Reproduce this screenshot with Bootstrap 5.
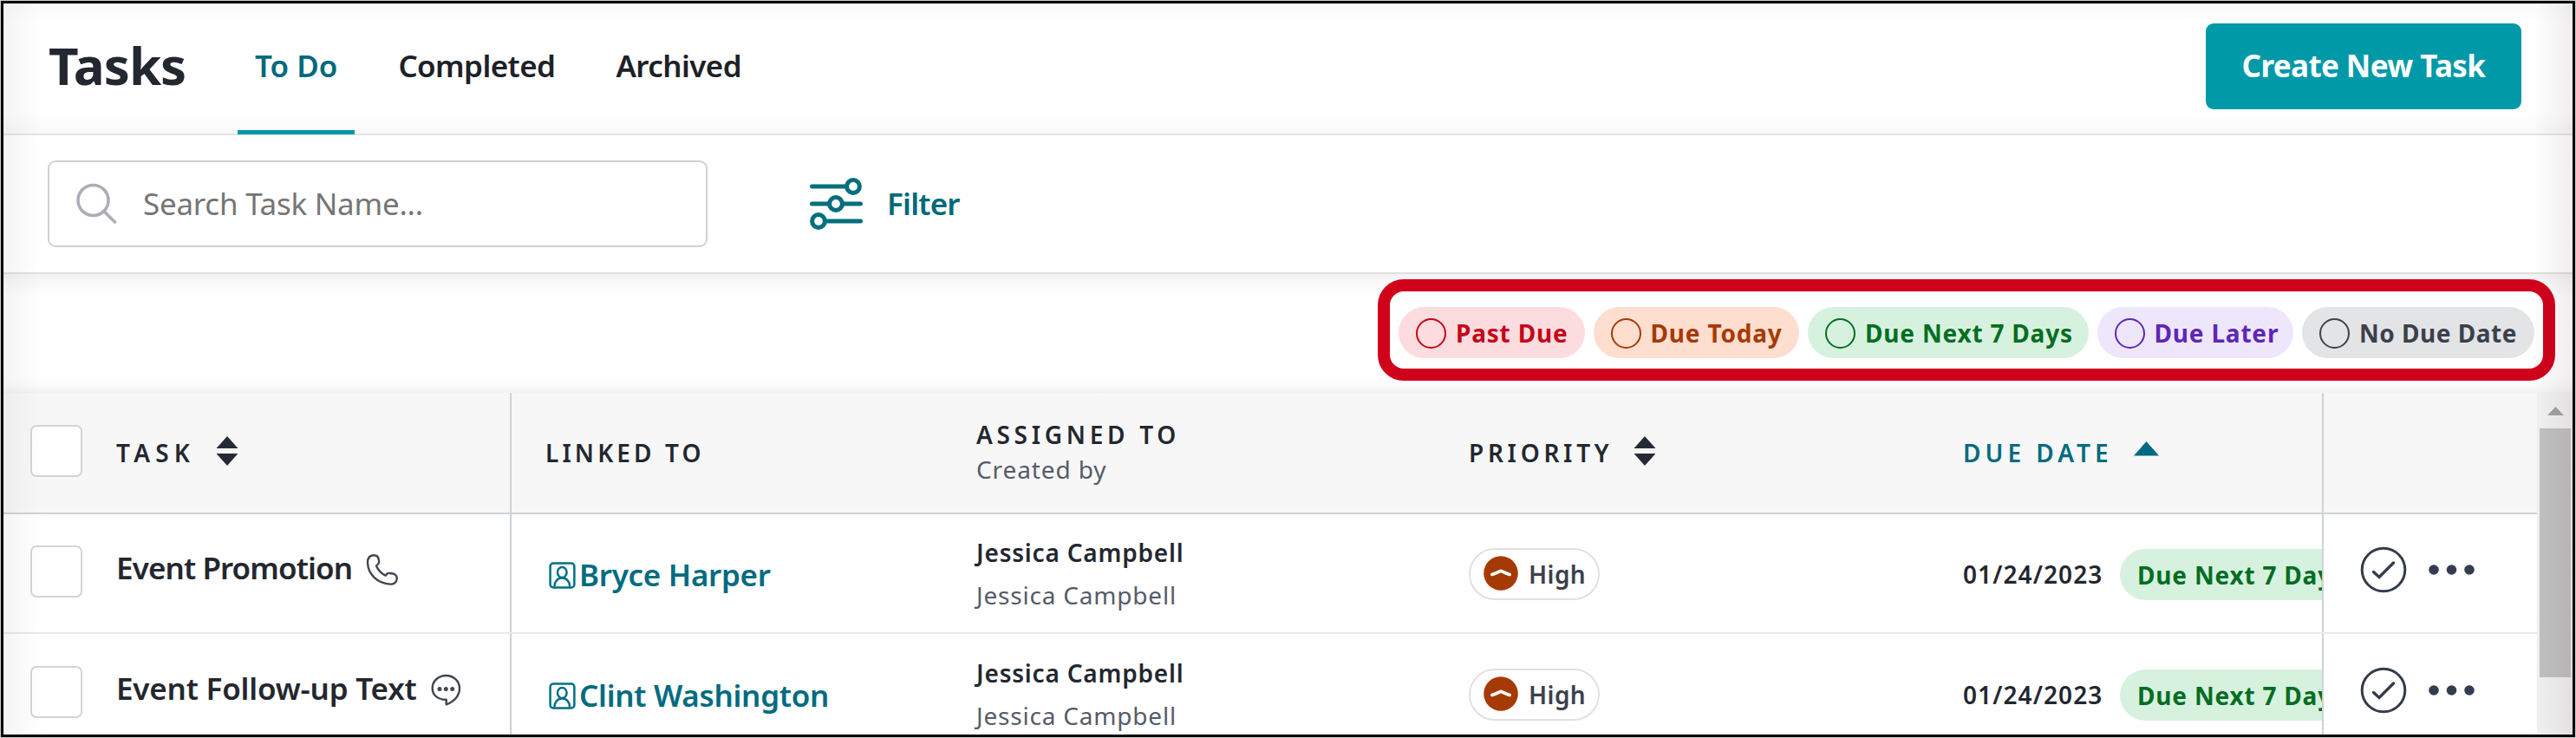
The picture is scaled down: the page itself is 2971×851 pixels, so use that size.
<!DOCTYPE html>
<html lang="en">
<head>
    <meta charset="UTF-8">
    <meta name="viewport" content="width=device-width, initial-scale=1.0">
    <title>Tasks</title>
    <!-- Bootstrap CSS -->
    <link href="https://cdn.jsdelivr.net/npm/bootstrap@5.3.0/dist/css/bootstrap.min.css" rel="stylesheet">
    <style>
        body {
            font-family: "Noto Sans", "Open Sans", sans-serif;
            font-size: 28px;
            color: #23272f;
            background: #cfcfcf;
            padding: 1px;
            white-space: nowrap;
        }

        svg {
            display: block;
            flex: none;
        }

        .app-frame {
            height: 849px;
            border: 3px solid #000;
            background: #fff;
        }

        /* Soft shading along the sides of the window */
        .app-frame::after {
            content: '';
            position: absolute;
            inset: 0;
            pointer-events: none;
            background: linear-gradient(90deg, rgba(0, 0, 0, .04), transparent 45px),
                        linear-gradient(270deg, rgba(40, 0, 20, .07), transparent 45px);
        }

        /* Header */
        .task-header {
            height: 152px;
            padding: 0 59px 0 52px;
            border-bottom: 2px solid #e3e4e5;
            background: linear-gradient(#fafafa, #fff 22px, #fff 125px, #f8f8f8);
        }

        .task-title {
            font-size: 60px;
            font-weight: 700;
            line-height: 60px;
            letter-spacing: -1px;
            width: 218px;
            padding-bottom: 8px;
        }

        .task-tabs .nav-link {
            height: 152px;
            padding: 43px 20px 0;
            margin-right: 30px;
            border-bottom: 5px solid transparent;
            font-size: 35px;
            font-weight: 600;
            line-height: 60px;
            letter-spacing: -.6px;
            color: #1d2127;
        }

        .task-tabs .nav-link.active {
            letter-spacing: 0;
            color: #00697a;
            border-bottom-color: #0097a7;
        }

        .btn-create {
            width: 364px;
            height: 99px;
            margin-bottom: 5px;
            border-radius: 9px;
            background: #0099a8;
            color: #fff;
            font-size: 35px;
            font-weight: 700;
            letter-spacing: -.6px;
        }

        /* Search and filter */
        .filter-bar {
            height: 160px;
            padding-left: 51px;
            border-bottom: 2px solid #dfdfdf;
        }

        .search-box {
            width: 761px;
            height: 100px;
            border: 2px solid #ccd2d7;
            border-radius: 9px;
            padding-left: 30px;
            gap: 28px;
        }

        .search-box input {
            padding: 0;
            font-size: 35px;
            line-height: 50px;
            letter-spacing: -.25px;
            color: #757575;
        }

        .search-box input::placeholder {
            color: #757575;
        }

        .filter-link {
            margin-left: 117px;
            gap: 28px;
            font-size: 35px;
            font-weight: 600;
            letter-spacing: -.8px;
            color: #00697a;
        }

        /* Due date legend */
        .legend-strip {
            height: 137px;
            padding: 6px 20px 14px;
            background: linear-gradient(#f3f3f3, #fff 25px, #fff 115px, #fcfcfc 128px, #f2f2f2);
        }

        .legend-box {
            width: 1358px;
            border: 14px solid #d0021b;
            border-radius: 30px;
            padding: 5px 0 0 10px;
            gap: 10px;
        }

        .due-pill {
            height: 59px;
            border-radius: 30px;
            padding: 2px 0 0 20px;
            gap: 11px;
            font-weight: 700;
            letter-spacing: .8px;
            flex: none;
        }

        .due-pill::before {
            content: '';
            width: 35px;
            height: 35px;
            border: 2px solid;
            border-radius: 50%;
        }

        .due-past { width: 214.5px; background: #fddcdf; color: #c60419; }
        .due-today { width: 237.5px; background: #fedecf; color: #a63a05; }
        .due-week { width: 323.5px; background: #d6f2df; color: #056d22; }
        .due-later { width: 226.5px; background: #eee6fb; color: #5f26b5; }
        .due-none { width: 267.5px; background: #e2e4e6; color: #3b404c; letter-spacing: .5px; }
        .due-cut { width: 323.5px; gap: 0; }
        .due-cut::before { display: none; }

        /* Task list */
        .list-area {
            height: 394px;
        }

        .list-row {
            height: 138.7px;
            border-bottom: 2px solid #e8eaeb;
        }

        .list-head {
            height: 139.5px;
            background: #f7f7f7;
            border-bottom: 2px solid #ccd2d7;
            font-weight: 600;
            letter-spacing: 4.7px;
        }

        .list-row > div {
            flex: none;
            overflow: hidden;
        }

        .cell-task { width: 584px; padding-left: 31px; }
        .cell-linked { width: 503px; padding-left: 39px; border-left: 2px solid #ccd2d7; }
        .cell-assigned { width: 567px; padding: 2px 0 0 35px; }
        .cell-priority { width: 570px; padding-left: 36px; }
        .cell-due { width: 450px; padding-left: 36px; }
        .cell-actions { width: 248px; padding-left: 42px; gap: 25px; border-left: 2px solid #ccd2d7; }

        .list-check {
            width: 60px;
            height: 60px;
            margin: 0 39px 4px 0;
            border: 2px solid #d0d5d9;
            border-radius: 8px;
            flex: none;
        }

        .list-check:not(:checked) {
            background-color: #fff;
        }

        .task-name {
            font-size: 35px;
            font-weight: 600;
            letter-spacing: -.9px;
            padding-bottom: 11px;
            margin-right: 16px;
        }

        .contact-link {
            font-size: 35px;
            font-weight: 600;
            letter-spacing: -.3px;
            color: #006b80;
            gap: 4px;
            padding-top: 5px;
        }

        .created-by {
            font-weight: 400;
            letter-spacing: .9px;
            color: #565b68;
        }

        .list-head .cell-assigned {
            padding-top: 0;
            line-height: 39.5px;
        }

        .assignee {
            font-weight: 600;
            line-height: 49px;
            letter-spacing: .8px;
        }

        .created-by.assignee {
            font-weight: 400;
        }

        .priority-pill {
            width: 151px;
            height: 60px;
            margin-top: 3px;
            padding: 0 0 0 15px;
            border: 2px solid #dfe1e2;
            gap: 12px;
            font-weight: 600;
            letter-spacing: .4px;
            color: #3b404c;
        }

        .priority-pill svg {
            margin-bottom: 3px;
        }

        .due-date {
            width: 181px;
            padding-top: 3px;
            font-weight: 600;
            letter-spacing: 1.1px;
            flex: none;
        }

        .cell-due .due-pill {
            margin-top: 3px;
        }

        /* Scrollbar */
        .scroll-track {
            width: 41px;
            background: #f1f1f1;
            padding: 16px 2px 0 3px;
        }

        .scroll-thumb {
            width: 36px;
            height: 287px;
            margin-top: 15px;
            background: #c1c1c1;
        }
    </style>
</head>
<body>
    <svg class="d-none">
        <symbol id="sort" viewBox="0 0 26 36">
            <path d="M13 1 25.5 15H.5zM13 35 25.5 21H.5z" fill="#262a34"/>
        </symbol>
        <symbol id="contact" viewBox="0 0 31 31">
            <g fill="none" stroke="#007084" stroke-width="2.5">
                <rect x="1.6" y="1.6" width="27.8" height="27.8" rx="3.5"/>
                <ellipse cx="15.3" cy="12" rx="5.3" ry="6"/>
                <path d="M6.4 28.5C6.4 22.5 10 18.6 15.3 18.6s8.9 3.9 8.9 9.9"/>
            </g>
        </symbol>
        <symbol id="high" viewBox="0 0 40 40">
            <circle cx="20" cy="20" r="19.8" fill="#a63a05"/>
            <path d="M9.8 21.5C13 20.5 16 19 20 17.3c4 1.7 7 3.2 10.2 4.2" fill="none" stroke="#fff" stroke-width="3.6" stroke-linecap="round"/>
        </symbol>
        <symbol id="done" viewBox="0 0 54 54">
            <circle cx="27" cy="27" r="24.8" fill="none" stroke="#343b49" stroke-width="3"/>
            <path d="M15.5 29.5 22 35.5 38.5 19" fill="none" stroke="#343b49" stroke-width="3.4" stroke-linecap="round"/>
        </symbol>
        <symbol id="dots" viewBox="0 0 54 12">
            <path d="M6 6h.01M26.5 6h.01M47 6h.01" stroke="#343d50" stroke-width="11.6" stroke-linecap="round"/>
        </symbol>
    </svg>

    <div class="app-frame position-relative overflow-hidden">
        <header class="task-header d-flex align-items-center">
            <h1 class="task-title m-0">Tasks</h1>
            <nav class="nav task-tabs flex-grow-1">
                <a class="nav-link active" href="#">To Do</a>
                <a class="nav-link" href="#">Completed</a>
                <a class="nav-link" href="#">Archived</a>
            </nav>
            <button type="button" class="btn btn-create">Create New Task</button>
        </header>

        <div class="filter-bar d-flex align-items-center">
            <div class="search-box d-flex align-items-center">
                <svg width="50" height="50" viewBox="0 0 50 50" fill="none" stroke="#abaeb6" stroke-width="3.6" stroke-linecap="round">
                    <circle cx="20.5" cy="21" r="17.5"/>
                    <path d="M32.8 33.5 45.5 46"/>
                </svg>
                <input type="text" class="form-control border-0 shadow-none bg-transparent" placeholder="Search Task Name...">
            </div>
            <a class="filter-link d-flex align-items-center text-decoration-none" href="#">
                <svg width="62" height="60" viewBox="0 0 62 60" fill="none" stroke="#00707c" stroke-width="5" stroke-linecap="round">
                    <path d="M3.5 10H42M3.5 30H22M40 30H59.5M21 50H59.5"/>
                    <circle cx="51" cy="10" r="7.4"/>
                    <circle cx="31" cy="30" r="7.4"/>
                    <circle cx="11" cy="50" r="7.4"/>
                </svg>
                <span>Filter</span>
            </a>
        </div>

        <div class="legend-strip d-flex justify-content-end">
            <div class="legend-box d-flex align-items-center">
                <span class="due-pill due-past d-flex align-items-center">Past Due</span>
                <span class="due-pill due-today d-flex align-items-center">Due Today</span>
                <span class="due-pill due-week d-flex align-items-center">Due Next 7 Days</span>
                <span class="due-pill due-later d-flex align-items-center">Due Later</span>
                <span class="due-pill due-none d-flex align-items-center">No Due Date</span>
            </div>
        </div>

        <div class="list-area d-flex">
            <div class="flex-grow-1">
                <div class="list-row list-head d-flex">
                    <div class="cell-task d-flex align-items-center">
                        <input type="checkbox" class="form-check-input list-check" aria-label="Select all">
                        <span style="letter-spacing: 6.2px">TASK</span>
                        <svg class="ms-4 mb-1" width="26" height="36"><use href="#sort"/></svg>
                    </div>
                    <div class="cell-linked d-flex align-items-center" style="letter-spacing: 4.1px">LINKED TO</div>
                    <div class="cell-assigned d-flex flex-column justify-content-center">
                        <span>ASSIGNED TO</span>
                        <span class="created-by">Created by</span>
                    </div>
                    <div class="cell-priority d-flex align-items-center">
                        <span>PRIORITY</span>
                        <svg class="ms-4 mb-1" width="26" height="36"><use href="#sort"/></svg>
                    </div>
                    <div class="cell-due d-flex align-items-center" style="color: #006b80; letter-spacing: 5px">
                        <span>DUE DATE</span>
                        <svg class="ms-4 mb-2" width="29" height="17"><path d="M14.5 0 29 16.5H0z" fill="#006b80"/></svg>
                    </div>
                    <div class="cell-actions"></div>
                </div>

                <div class="list-row d-flex">
                    <div class="cell-task d-flex align-items-center">
                        <input type="checkbox" class="form-check-input list-check" aria-label="Select task">
                        <span class="task-name">Event Promotion</span>
                        <svg class="mb-2" width="38" height="38" viewBox="0 0 38 38" fill="none" stroke="#414650" stroke-width="2.4" stroke-linejoin="round">
                            <path d="M2 11C2 5 5 2.200 9 2.200c4 0 5.500 2.300 5.800 5.300.2 1.500 1.200 3-.4 4.500L12 14.500c2 4.500 6 9 10.700 11.100l1.900-2.200c1.400-1.100 3.400-.2 5.400-.1 4 .3 6 2.700 5.700 6.200-.3 4-3.700 6.500-7.700 6.100C13 34.500 2.500 24 2 11z"/>
                        </svg>
                    </div>
                    <div class="cell-linked d-flex align-items-center">
                        <a class="contact-link d-flex align-items-center text-decoration-none" href="#">
                            <svg class="ms-1" width="31" height="31"><use href="#contact"/></svg>
                            <span>Bryce Harper</span>
                        </a>
                    </div>
                    <div class="cell-assigned d-flex flex-column justify-content-center">
                        <span class="assignee">Jessica Campbell</span>
                        <span class="assignee created-by">Jessica Campbell</span>
                    </div>
                    <div class="cell-priority d-flex align-items-center">
                        <span class="priority-pill rounded-pill d-flex align-items-center">
                            <svg width="40" height="40"><use href="#high"/></svg>High
                        </span>
                    </div>
                    <div class="cell-due d-flex align-items-center">
                        <span class="due-date">01/24/2023</span>
                        <span class="due-pill due-week due-cut d-flex align-items-center">Due Next 7 Days</span>
                    </div>
                    <div class="cell-actions d-flex align-items-center pb-2">
                        <svg width="54" height="54"><use href="#done"/></svg>
                        <svg width="54" height="12"><use href="#dots"/></svg>
                    </div>
                </div>

                <div class="list-row d-flex">
                    <div class="cell-task d-flex align-items-center">
                        <input type="checkbox" class="form-check-input list-check" aria-label="Select task">
                        <span class="task-name" style="letter-spacing: -.2px">Event Follow-up Text</span>
                        <svg class="mb-2" width="35" height="38" viewBox="0 0 35 38" fill="none" stroke="#414650" stroke-width="2.4" stroke-linejoin="round">
                            <path d="M33 17C33 8 26 2 17.300 2S1.700 8.500 1.700 16.500C1.700 25 8.500 30 17.700 29.700v5.600C27 32 33 25 33 17z"/>
                            <path d="M10 17.500h.01M17.300 17.500h.01M24.700 17.500h.01" stroke-width="5" stroke-linecap="round"/>
                        </svg>
                    </div>
                    <div class="cell-linked d-flex align-items-center">
                        <a class="contact-link d-flex align-items-center text-decoration-none" href="#">
                            <svg class="ms-1" width="31" height="31"><use href="#contact"/></svg>
                            <span>Clint Washington</span>
                        </a>
                    </div>
                    <div class="cell-assigned d-flex flex-column justify-content-center">
                        <span class="assignee">Jessica Campbell</span>
                        <span class="assignee created-by">Jessica Campbell</span>
                    </div>
                    <div class="cell-priority d-flex align-items-center">
                        <span class="priority-pill rounded-pill d-flex align-items-center">
                            <svg width="40" height="40"><use href="#high"/></svg>High
                        </span>
                    </div>
                    <div class="cell-due d-flex align-items-center">
                        <span class="due-date">01/24/2023</span>
                        <span class="due-pill due-week due-cut d-flex align-items-center">Due Next 7 Days</span>
                    </div>
                    <div class="cell-actions d-flex align-items-center pb-2">
                        <svg width="54" height="54"><use href="#done"/></svg>
                        <svg width="54" height="12"><use href="#dots"/></svg>
                    </div>
                </div>
            </div>

            <div class="scroll-track">
                <svg class="mx-auto" width="19" height="10"><path d="M9.500 0 19 10H0z" fill="#a3a3a3"/></svg>
                <div class="scroll-thumb"></div>
            </div>
        </div>
    </div>

    <!-- Bootstrap JS Bundle -->
    <script src="https://cdn.jsdelivr.net/npm/bootstrap@5.3.0/dist/js/bootstrap.bundle.min.js"></script>
</body>
</html>
